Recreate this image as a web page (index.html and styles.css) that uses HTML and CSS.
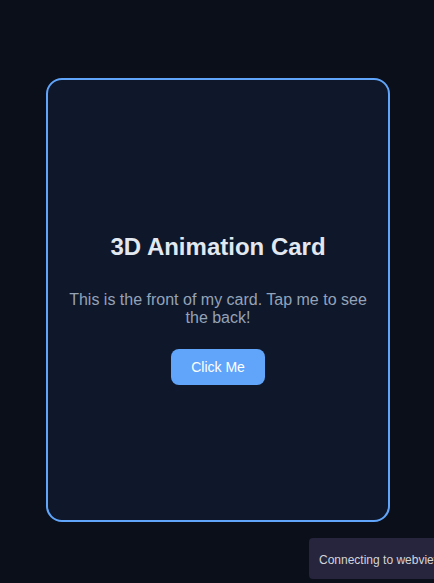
FILE: index.html
```html
<!DOCTYPE html>
<html lang="en">
<head>
<meta charset="utf-8">
<title>3D Animation Card</title>
<link rel="stylesheet" href="styles.css">
</head>
<body>
<main class="stage">
  <section class="card">
    <h2 class="card-title">3D Animation Card</h2>
    <p class="card-text">This is the front of my card. Tap me to see the back!</p>
    <button class="card-btn" type="button">Click Me</button>
  </section>
</main>
<div class="toast">Connecting to webview...</div>
</body>
</html>
```
FILE: styles.css
```css
html, body {
  margin: 0;
  padding: 0;
  height: 100%;
  overflow: hidden;
  background: #0b0f19;
  font-family: "Liberation Sans", Arial, sans-serif;
}
.stage {
  padding-top: 78px;
  padding-left: 46px;
}
.card {
  box-sizing: border-box;
  width: 344px;
  height: 444px;
  border: 2px solid #60a5fa;
  border-radius: 16px;
  background: #0f172a;
  padding: 34px 16px 16px;
  display: flex;
  flex-direction: column;
  align-items: center;
  justify-content: center;
  text-align: center;
}
.card-title {
  margin: 0 0 30px;
  font-size: 24px;
  font-weight: bold;
  color: #e2e8f0;
}
.card-text {
  margin: 0 0 22px;
  font-size: 16px;
  color: #94a3b8;
}
.card-btn {
  border: none;
  border-radius: 8px;
  background: #60a5fa;
  color: #ffffff;
  font-family: "Liberation Sans", Arial, sans-serif;
  font-size: 14px;
  padding: 10px 20px;
}
.toast {
  position: fixed;
  left: 309px;
  bottom: 4px;
  height: 41px;
  box-sizing: border-box;
  padding: 3px 10px 0;
  display: flex;
  align-items: center;
  background: #26253d;
  color: #d4d4d8;
  font-size: 12px;
  border-radius: 4px;
  white-space: nowrap;
}
```
